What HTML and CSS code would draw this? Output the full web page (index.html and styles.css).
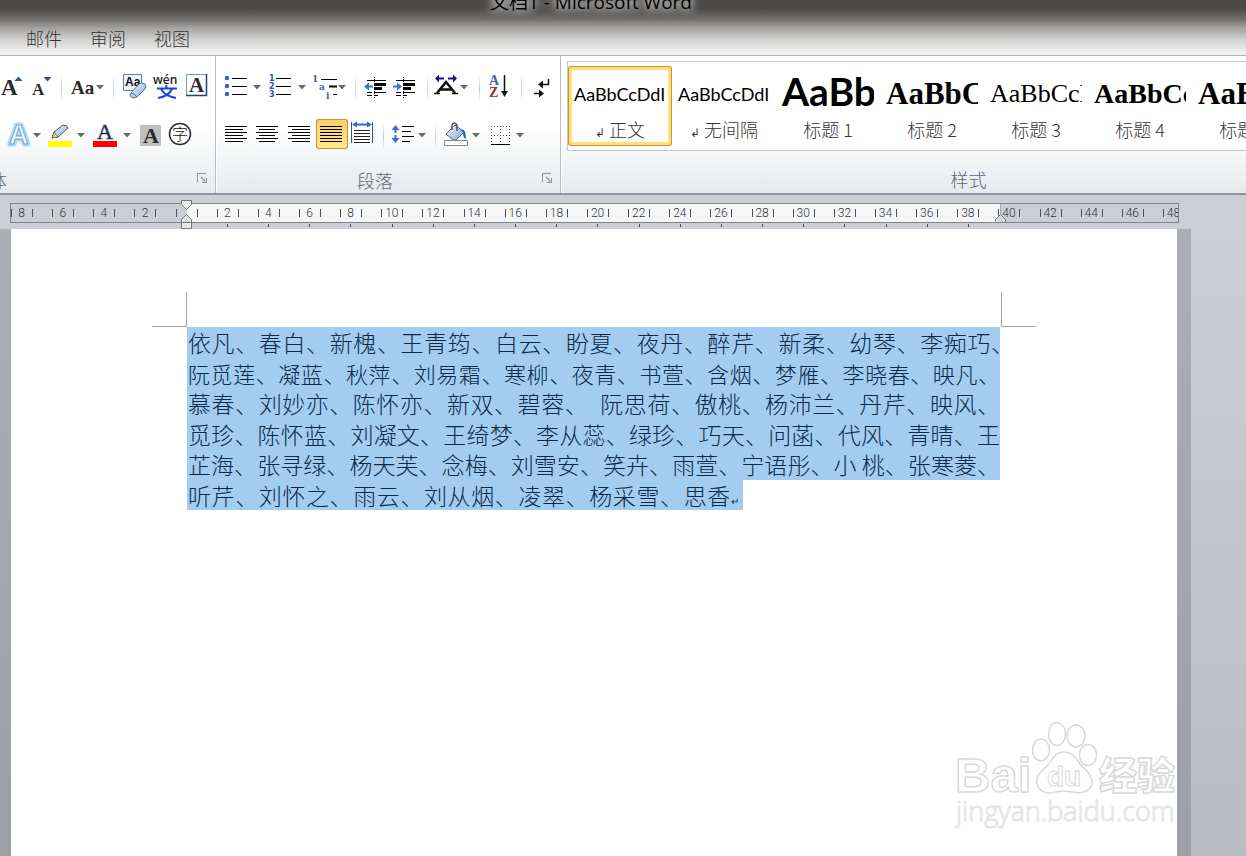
FILE: index.html
```
<!DOCTYPE html>
<html lang="zh-CN">

<head>
    <meta charset="UTF-8" />
    <meta name="viewport" content="width=device-width, initial-scale=1.0" />
    <title>文档1 - Microsoft Word</title>
    <link rel="stylesheet" href="styles.css">
</head>

<body>

    <svg class="defs" aria-hidden="true">
        <defs>
            <symbol id="drop" viewBox="0 0 8 5">
                <path d="M0 0h8L4 4.5z" fill="#6b6b6b" />
            </symbol>
            <symbol id="launcher" viewBox="0 0 10 10">
                <path d="M.5 9V.5H9" fill="none" stroke="#8e949b" />
                <path d="M4 4l4 4M9.500 5v4.500H5" fill="none" stroke="#8e949b" stroke-width="1.300" />
            </symbol>
            <linearGradient id="metal" x1="0" y1="0" x2="1" y2="1">
                <stop offset="0" stop-color="#fff" />
                <stop offset="1" stop-color="#7f9fd6" />
            </linearGradient>
        </defs>
    </svg>

    <header class="titlebar">
        <div class="window-title">文档1 - Microsoft Word</div>
        <nav class="tabs">
            <button>邮件</button>
            <button>审阅</button>
            <button>视图</button>
        </nav>
    </header>

    <section class="ribbon">
        <!-- 字体 -->
        <div class="group group-font">
            <div class="tools">
                <button aria-label="增大字体"><svg width="24" height="32">
                        <text x="1" y="24" class="letter" font-size="23">A</text>
                        <path d="M14.500 10h8l-4-4.500z" fill="#2b4f9e" />
                    </svg></button>
                <button aria-label="缩小字体"><svg width="32" height="32">
                        <text x="8" y="24" class="letter" font-size="17">A</text>
                        <path d="M19.500 6h8l-4 4.500z" fill="#2b4f9e" />
                    </svg></button>
                <i class="sep"></i>
                <button aria-label="更改大小写"><svg width="42" height="32">
                        <text x="5" y="23" class="letter" font-size="19">Aa</text>
                        <use href="#drop" x="30" y="14" width="8" height="5" />
                    </svg></button>
                <i class="sep"></i>
                <button aria-label="清除格式"><svg width="32" height="32">
                        <path d="M5.500 3.500h18v16h-18z" fill="#eef4fc" stroke="#5b7fb5" />
                        <text x="7" y="15" font-size="12" font-weight="700" font-family="Liberation Sans" fill="#111">Aa</text>
                        <path d="M13 22l8-9q3-2 6 0 2 2 0 5l-8 8q-3 2-6 0-2-2 0-4z" fill="url(#metal)" stroke="#5c759f" />
                        <path d="M13 22q3 0 6 4" fill="none" stroke="#5c759f" />
                    </svg></button>
                <button aria-label="拼音指南"><svg width="32" height="32">
                        <text x="3" y="13" font-size="12" font-weight="600" font-family="Open Sans" fill="#222">wén</text>
                        <path d="M7 17.500h20M16 14l1 4M22 18q-3 7-14 9M11 18q4 7 15 9" fill="none" stroke="#1d46d2" stroke-width="2" />
                    </svg></button>
                <button aria-label="字符边框"><svg width="32" height="32">
                        <path d="M4.500 3.500h20v21h-20z" fill="#fff" stroke="#6f97c0" />
                        <path d="M4 24.500h20.500V3" fill="none" stroke="#1f4466" stroke-width="1.500" />
                        <text x="7" y="21" class="letter" font-size="21">A</text>
                    </svg></button>
            </div>
            <div class="tools">
                <button aria-label="文本效果"><svg width="42" height="32">
                        <text x="9" y="25" font-size="27" font-weight="700" font-family="Liberation Sans" fill="#a5dcf4" stroke="#a5dcf4" stroke-width="5" stroke-linejoin="round">A</text>
                        <text x="9" y="25" font-size="27" font-weight="700" font-family="Liberation Sans" fill="#f4f9ff" stroke="#7ba4d8">A</text>
                        <use href="#drop" x="33" y="14" width="8" height="5" />
                    </svg></button>
                <button aria-label="突出显示"><svg width="46" height="32">
                        <path d="M10 19l2-6L21 6q4 0 5 3l-10 9z" fill="url(#metal)" stroke="#3f5270" />
                        <path d="M10 19l2-6 4 5z" fill="#e9cf7c" stroke="#6e5b2c" stroke-width=".7" />
                        <path d="M6 22h24v6H6z" fill="#ff0" />
                        <use href="#drop" x="35" y="14" width="8" height="5" />
                    </svg></button>
                <button aria-label="字体颜色"><svg width="46" height="32">
                        <text x="9" y="20" font-size="22" font-family="Liberation Serif" fill="#1b2f66" stroke="#1b2f66" stroke-width=".5">A</text>
                        <path d="M5 22h24v6H5z" fill="#f00" />
                        <use href="#drop" x="35" y="14" width="8" height="5" />
                    </svg></button>
                <button aria-label="字符底纹"><svg width="30" height="32">
                        <path d="M6 6h21v21H6z" fill="#bfbfbf" />
                        <text x="9" y="24" class="letter" font-size="22">A</text>
                    </svg></button>
                <button aria-label="带圈字符"><svg width="32" height="32">
                        <circle cx="16" cy="15" r="10.500" fill="#fff" stroke="#2b2b2b" stroke-width="1.500" />
                        <text x="8" y="21" font-size="16" font-family="Noto Sans CJK SC" fill="#111">字</text>
                    </svg></button>
            </div>
            <div class="caption">
                <span>字体</span>
                <button aria-label="字体设置"><svg width="10" height="10"><use href="#launcher" /></svg></button>
            </div>
        </div>

        <!-- 段落 -->
        <div class="group group-para">
            <div class="tools">
                <button aria-label="项目符号"><svg width="46" height="32">
                        <g fill="#2f62cf">
                            <circle cx="9" cy="7" r="2.200" />
                            <circle cx="9" cy="15" r="2.200" />
                            <circle cx="9" cy="23" r="2.200" />
                        </g>
                        <path d="M14 7.500h15M14 15.500h15M14 23.500h15" stroke="#000" />
                        <use href="#drop" x="35" y="14" width="8" height="5" />
                    </svg></button>
                <button aria-label="编号"><svg width="44" height="32">
                        <g font-size="8" font-weight="700" font-family="DejaVu Sans" fill="#2a55c0">
                            <text x="5" y="10">1</text>
                            <text x="5" y="18">2</text>
                            <text x="5" y="26">3</text>
                        </g>
                        <path d="M12 7.500h15M12 15.500h15M12 23.500h15" stroke="#000" />
                        <use href="#drop" x="34" y="14" width="8" height="5" />
                    </svg></button>
                <button aria-label="多级列表"><svg width="42" height="32">
                        <g font-size="9" font-weight="700" font-family="DejaVu Serif" fill="#3d62b4">
                            <text x="4" y="11">1</text>
                            <text x="11" y="19">a</text>
                            <text x="18" y="28">i</text>
                        </g>
                        <path d="M13 8.500h16M25 23.500h4" stroke="#000" />
                        <path d="M21 15.500h8" stroke="#000" stroke-width="2" />
                        <use href="#drop" x="30" y="14" width="8" height="5" />
                    </svg></button>
                <i class="sep"></i>
                <button aria-label="减少缩进"><svg width="30" height="32">
                        <path d="M7 9.500h19M7 21.500h5M14 21.500h12M7 24.500h5M14 24.500h4" stroke="#000" />
                        <path d="M14 13.500h12M14 17.500h8" stroke="#000" stroke-width="3" />
                        <path d="M14.500 6v22" stroke="#000" stroke-dasharray="1 1" />
                        <path d="M4 15.500l5-4v3h4v2H9v3z" fill="#3a72d8" />
                    </svg></button>
                <button aria-label="增加缩进"><svg width="32" height="32">
                        <path d="M6 9.500h19M6 21.500h5M13 21.500h12M6 24.500h5M13 24.500h4" stroke="#000" />
                        <path d="M13 13.500h12M13 17.500h8" stroke="#000" stroke-width="3" />
                        <path d="M13.500 6v22" stroke="#000" stroke-dasharray="1 1" />
                        <path d="M12 15.500l-5-4v3H3v2h4v3z" fill="#3a72d8" />
                    </svg></button>
                <i class="sep"></i>
                <button aria-label="中文版式"><svg width="42" height="32">
                        <path d="M3 7.500l4-4v3h5v2H7v3zM25 7.500l-4-4v3h-5v2h5v3z" fill="#15158f" />
                        <path d="M5 22l9-11 9 11M8 18.500h12" fill="none" stroke="#111" stroke-width="2.500" />
                        <path d="M2 22.500h6M20 22.500h6" stroke="#111" stroke-width="1.500" />
                        <use href="#drop" x="28" y="14" width="8" height="5" />
                    </svg></button>
                <i class="sep"></i>
                <button aria-label="排序"><svg width="32" height="32">
                        <text x="5" y="14" font-size="14" font-weight="700" font-family="Liberation Serif" fill="#3f65ad">A</text>
                        <text x="5" y="26" font-size="14" font-weight="700" font-family="Liberation Serif" fill="#9c2b30">Z</text>
                        <path d="M20.500 4v18" stroke="#111" stroke-width="1.500" />
                        <path d="M17 20h7l-3.500 6z" fill="#111" />
                    </svg></button>
                <i class="sep"></i>
                <button aria-label="显示编辑标记"><svg width="30" height="32">
                        <path d="M22.500 8v5.500H15M8 22.500h8" fill="none" stroke="#111" stroke-width="1.500" />
                        <path d="M12 13.500l5-4v8zM18 22.500l-5-4v8z" fill="#111" />
                    </svg></button>
            </div>
            <div class="tools">
                <button aria-label="左对齐"><svg width="32" height="32">
                        <path d="M7 7.500h22M7 10.500h18M7 13.500h22M7 16.500h18M7 19.500h22M7 22.500h18" stroke="#000" />
                    </svg></button>
                <button aria-label="居中"><svg width="32" height="32">
                        <path d="M6 7.500h22M9 10.500h16M6 13.500h22M9 16.500h16M6 19.500h22M9 22.500h16" stroke="#000" />
                    </svg></button>
                <button aria-label="右对齐"><svg width="34" height="32">
                        <path d="M6 7.500h22M10 10.500h18M6 13.500h22M10 16.500h18M6 19.500h22M10 22.500h18" stroke="#000" />
                    </svg></button>
                <button class="pressed" aria-label="两端对齐"><svg width="32" height="30">
                        <path d="M4 7.500h22M4 10.500h22M4 13.500h22M4 16.500h22M4 19.500h22M4 22.500h22" stroke="#000" />
                    </svg></button>
                <button aria-label="分散对齐"><svg width="30" height="32">
                        <path d="M3.500 3v21M24.500 3v21" stroke="#44546c" />
                        <path d="M6 11.500h16M6 14.500h16M6 17.500h16M6 20.500h16M6 23.500h16" stroke="#222" />
                        <path d="M4 5.500l5-3v2h10v-2l5 3-5 3v-2H9v2z" fill="#3568c9" />
                    </svg></button>
                <i class="sep"></i>
                <button aria-label="行距"><svg width="42" height="32">
                        <path d="M7.500 6l4 5h-3v3h-2v-3h-3zM7.500 24l4-5h-3v-3h-2v3h-3z" fill="#3a6cd2" />
                        <path d="M14 7.500h12M14 12.500h9M14 17.500h12M14 22.500h8" stroke="#000" />
                        <use href="#drop" x="30" y="14" width="8" height="5" />
                    </svg></button>
                <i class="sep"></i>
                <button aria-label="底纹"><svg width="44" height="32">
                        <path d="M6 15l9-9 9 7-8 8q-2 1-4-1z" fill="url(#metal)" stroke="#4a66a0" />
                        <path d="M12 11V6q2-4 5 0v6" fill="none" stroke="#555" stroke-width="1.500" />
                        <path d="M20 11q6-3 6 9-3-1-3-7z" fill="#2d5fc4" />
                        <path d="M4.500 21.500h23v5h-23z" fill="#fff" stroke="#888" />
                        <use href="#drop" x="32" y="14" width="8" height="5" />
                    </svg></button>
                <button aria-label="边框"><svg width="44" height="32">
                        <path d="M7.500 7v18M16.500 7v18M25.500 7v18M7 7.500h19M7 16.500h19" stroke="#555" stroke-dasharray="1 2" />
                        <path d="M7 25.500h19" stroke="#000" />
                        <use href="#drop" x="32" y="14" width="8" height="5" />
                    </svg></button>
            </div>
            <div class="caption">
                <span>段落</span>
                <button aria-label="段落设置"><svg width="10" height="10"><use href="#launcher" /></svg></button>
            </div>
        </div>

        <!-- 样式 -->
        <div class="group group-styles">
            <div class="gallery">
                <button class="style-item selected">
                    <span class="preview">AaBbCcDdI</span>
                    <span class="style-name"><small>↲</small> 正文</span>
                </button>
                <button class="style-item">
                    <span class="preview">AaBbCcDdI</span>
                    <span class="style-name"><small>↲</small> 无间隔</span>
                </button>
                <button class="style-item">
                    <span class="preview h1">AaBb</span>
                    <span class="style-name">标题 1</span>
                </button>
                <button class="style-item">
                    <span class="preview h2">AaBbC</span>
                    <span class="style-name">标题 2</span>
                </button>
                <button class="style-item">
                    <span class="preview h3">AaBbCcD</span>
                    <span class="style-name">标题 3</span>
                </button>
                <button class="style-item">
                    <span class="preview h4">AaBbCc</span>
                    <span class="style-name">标题 4</span>
                </button>
                <button class="style-item">
                    <span class="preview h2">AaBbC</span>
                    <span class="style-name">标题 5</span>
                </button>
            </div>
            <div class="caption"><span>样式</span></div>
        </div>
    </section>

    <!-- 标尺 -->
    <div class="ruler-bar">
        <div class="ruler">
            <div class="scale">
                <span>8</span><span>6</span><span>4</span><span>2</span><span></span>
                <span>2</span><span>4</span><span>6</span><span>8</span><span>10</span>
                <span>12</span><span>14</span><span>16</span><span>18</span><span>20</span>
                <span>22</span><span>24</span><span>26</span><span>28</span><span>30</span>
                <span>32</span><span>34</span><span>36</span><span>38</span><span>40</span>
                <span>42</span><span>44</span><span>46</span><span>48</span>
            </div>
        </div>
        <div class="tab-stops">
            <i></i><i></i><i></i><i></i><i></i><i></i><i></i><i></i><i></i><i></i>
            <i></i><i></i><i></i><i></i><i></i><i></i><i></i><i></i><i></i>
        </div>
        <svg class="indent indent-left" width="12" height="30">
            <path d="M.5.500h10v4l-5 5-5-5z" fill="#eee" stroke="#777" />
            <path d="M.5 28.500v-9l5-5 5 5v9zM.5 22.500h10" fill="#e6e6e6" stroke="#777" />
        </svg>
        <svg class="indent indent-right" width="12" height="8">
            <path d="M.5 7.500v-2l5-5 5 5v2" fill="#d8d8d8" stroke="#777" />
        </svg>
    </div>

    <main class="workspace">
        <article class="page">
            <div class="crop-marks"><i></i><i></i></div>
            <div class="text">
                <p class="hang">依凡、春白、新槐、王青筠、白云、盼夏、夜丹、醉芹、新柔、幼琴、李痴巧、</p>
                <p class="dense">阮觅莲、凝蓝、秋萍、刘易霜、寒柳、夜青、书萱、含烟、梦雁、李晓春、映凡、</p>
                <p>慕春、刘妙亦、陈怀亦、新双、碧蓉、&ensp;阮思荷、傲桃、杨沛兰、丹芹、映风、</p>
                <p>觅珍、陈怀蓝、刘凝文、王绮梦、李从蕊、绿珍、巧天、问菡、代风、青晴、王</p>
                <p>芷海、张寻绿、杨天芙、念梅、刘雪安、笑卉、雨萱、宁语彤、小 桃、张寒菱、</p>
                <p class="last">听芹、刘怀之、雨云、刘从烟、凌翠、杨采雪、思香<small>↵</small></p>
            </div>

            <svg class="watermark" width="226" height="112" viewBox="0 0 226 112">
                <g fill="#fff" stroke="#d9d9d9" stroke-width="1.500">
                    <text x="4" y="73" font-size="49" font-weight="700" font-family="Liberation Sans">Bai</text>
                    <ellipse cx="90" cy="31" rx="8.500" ry="11" />
                    <ellipse cx="106" cy="15" rx="8.500" ry="11.500" />
                    <ellipse cx="125" cy="17" rx="9" ry="11" />
                    <ellipse cx="137" cy="36" rx="8.500" ry="10.500" />
                    <path d="M113 33c-8 0-11 6-15 12-5 6-14 10-12 20 2 9 12 10 18 8 6-1 12-1 18 0 7 2 17 0 19-8 1-9-7-14-12-20-4-6-8-12-16-12z" />
                    <text x="96" y="67" font-size="28" font-weight="700" font-family="Liberation Sans" stroke-width="1">du</text>
                    <text x="148" y="70" font-size="38" font-weight="900" font-family="Noto Sans CJK SC">经验</text>
                    <text x="5" y="102" font-size="27" font-family="Open Sans" stroke="#e3e3e3" stroke-width="1">jingyan.baidu.com</text>
                </g>
            </svg>
        </article>
    </main>

</body>

</html>
```
FILE: styles.css
```
* {
    box-sizing: border-box;
}

html,
body {
    margin: 0;
    height: 100%;
}

body {
    display: flex;
    flex-direction: column;
    overflow: hidden;
    background: #c9cdd2;
    font-family: "Noto Sans CJK SC", sans-serif;
    font-size: 18px;
    font-weight: 300;
}

button {
    margin: 0;
    padding: 0;
    border: 0;
    background: none;
    font: inherit;
    color: inherit;
}

svg {
    display: block;
}

.defs {
    position: absolute;
    width: 0;
    height: 0;
}

/* title bar */
.titlebar {
    display: flex;
    flex-direction: column;
    justify-content: space-between;
    height: 56px;
    overflow: hidden;
    border-bottom: 1px solid #aeb0b2;
    background: linear-gradient(#4b4a48 8px, #6b6a69 18px, #a3a2a1 28px, #d3d3d2 40px, #efefef 52px);
}

.window-title {
    height: 18px;
    padding-right: 64px;
    line-height: 5px;
    text-align: center;
    font-family: "Open Sans", "Noto Sans CJK SC", sans-serif;
    font-size: 19px;
    font-weight: 400;
    color: #000;
    text-shadow: 0 0 6px #b5b4b3, 0 0 8px #b5b4b3, 0 0 10px #a5a4a3, 0 0 12px #a5a4a3;
}

.tabs {
    display: flex;
    gap: 28px;
    padding: 0 26px;
    line-height: 34px;
    color: #333;
}

/* ribbon */
.ribbon {
    display: flex;
    height: 139px;
    border-bottom: 2px solid #8f959c;
    background: linear-gradient(#fff 50%, #f6f7f8 70%, #e6eaee);
}

.group {
    display: flex;
    flex: none;
    flex-direction: column;
    padding-top: 15px;
    overflow: hidden;
}

.group-font,
.group-para {
    border-right: 1px solid #b9bec6;
    box-shadow: 1px 0 0 #fff;
}

.group-font {
    width: 216px;
}

.group-para {
    width: 345px;
    padding-left: 2px;
}

.group-styles {
    flex: 1;
    min-width: 0;
    padding: 5px 0 0 6px;
}

.tools {
    display: flex;
    align-items: flex-start;
    height: 48px;
}

.letter {
    font-family: "Liberation Serif", serif;
    font-weight: 700;
    fill: #2b2b2b;
}

.sep {
    flex: none;
    width: 10px;
    height: 28px;
    margin-top: 4px;
    background: linear-gradient(#fff, #c3c8cf, #fff) center / 1px 100% no-repeat;
}

.pressed {
    height: 30px;
    border-radius: 3px;
    background: linear-gradient(#fbd067, #ffe98a);
    box-shadow: inset 0 0 0 1px #c2953a;
}

.caption {
    display: flex;
    align-items: center;
    justify-content: center;
    height: 26px;
    line-height: 26px;
    color: #5c6773;
}

.caption button {
    margin-top: -4px;
}

.group-font .caption {
    justify-content: space-between;
    margin-left: -29px;
    padding-right: 8px;
}

.group-para .caption span {
    flex: 1;
    padding-right: 10px;
    text-align: center;
}

.group-para .caption {
    padding-right: 8px;
}

.group-styles .caption {
    margin: 15px -130px 0 -6px;
}

/* style gallery */
.gallery {
    display: flex;
    flex: none;
    height: 90px;
    padding-top: 4px;
    border: 1px solid #c5c9cd;
    border-right: 0;
    background: #fff;
}

.style-item {
    display: flex;
    flex: none;
    flex-direction: column;
    width: 104px;
    height: 80px;
    padding: 4px 6px;
}

.selected {
    border-radius: 3px;
    box-shadow: inset 0 0 0 1px #c2953a, inset 0 0 0 4px #ffdf76;
}

.preview {
    width: 92px;
    height: 48px;
    overflow: hidden;
    line-height: 48px;
    text-align: left;
    white-space: nowrap;
    font-family: Lato, sans-serif;
    font-size: 18px;
    font-weight: 400;
    color: #000;
}

.preview.h1 {
    font-size: 39px;
    line-height: 42px;
    font-weight: 700;
}

.preview.h2,
.preview.h3,
.preview.h4 {
    font-family: "Liberation Serif", serif;
    font-weight: 700;
}

.preview.h2 {
    font-size: 31px;
}

.preview.h3 {
    font-size: 26px;
    font-weight: 400;
}

.preview.h4 {
    font-size: 28px;
}

.style-name {
    line-height: 22px;
    text-align: center;
    color: #333;
}

.style-name small {
    font-family: "DejaVu Sans", sans-serif;
    font-size: 12px;
    line-height: 12px;
}

/* ruler */
.ruler-bar {
    position: relative;
    height: 34px;
    padding: 8px 67px 0 10px;
    background: #cbced2;
}

.ruler {
    height: 20px;
    overflow: hidden;
    border: 1px solid #7d848c;
    background: linear-gradient(to right, #cbced2 176px, #f6f6f6 176px, #f6f6f6 989px, #7d848c 989px, #cbced2 990px);
}

.scale {
    display: flex;
    width: 1193px;
    margin-left: -10px;
    padding-top: 5px;
}

.scale span {
    flex: 1;
    height: 8px;
    line-height: 8px;
    text-align: center;
    font-family: Roboto, sans-serif;
    font-size: 12px;
    font-weight: 300;
    color: #30353a;
    background:
        linear-gradient(#4c5157, #4c5157) 10px 0 / 1px 8px no-repeat,
        linear-gradient(#4c5157, #4c5157) 31px 0 / 1px 8px no-repeat;
}

.tab-stops {
    display: flex;
    justify-content: space-between;
    width: 742px;
    margin: 1px 0 0 217px;
}

.tab-stops i {
    width: 1px;
    height: 3px;
    background: #4c5157;
}

.indent {
    position: absolute;
}

.indent-left {
    top: 5px;
    left: 181px;
}

.indent-right {
    top: 19px;
    left: 995px;
}

/* document */
.workspace {
    flex: 1;
    padding: 0 55px 0 0;
    background:
        linear-gradient(#cbced2, #b9bdc2) right / 55px 100% no-repeat,
        linear-gradient(#abafb4, #9ca0a4);
}

.page {
    position: relative;
    height: 100%;
    margin: 0 14px 0 11px;
    padding: 63px 177px 0 176px;
    background: #fff;
}

.crop-marks {
    display: flex;
    justify-content: space-between;
    margin: 0 -36px 0 -35px;
}

.crop-marks i {
    width: 35px;
    height: 35px;
    border: solid #a6a6a6;
    border-width: 0 1px 1px 0;
}

.crop-marks i:last-child {
    border-width: 0 0 1px 1px;
}

/* the selection covers the full lines, the last one has its own */
.text {
    display: grid;
    grid-template-rows: repeat(6, 1fr);
    grid-template-columns: minmax(0, 1fr);
    height: 183px;
    font-size: 23px;
    line-height: 30px;
    color: #0b2a4a;
    background: linear-gradient(#a3cdf0, #a3cdf0) top / 100% 153px no-repeat;
}

.text p {
    margin: 0;
    padding-left: 1px;
    white-space: nowrap;
    text-align-last: justify;
}

/* the closing comma hangs into the margin */
.text .hang {
    margin-right: -14px;
}

.text .dense {
    font-size: 22px;
}

.text .last {
    width: calc(68% + 3px);
    padding-right: 4px;
    background: #a3cdf0;
}

.text small {
    font-family: "DejaVu Sans", sans-serif;
    font-size: 10px;
    line-height: 10px;
}

.watermark {
    position: absolute;
    right: 0;
    bottom: 25px;
}
```
